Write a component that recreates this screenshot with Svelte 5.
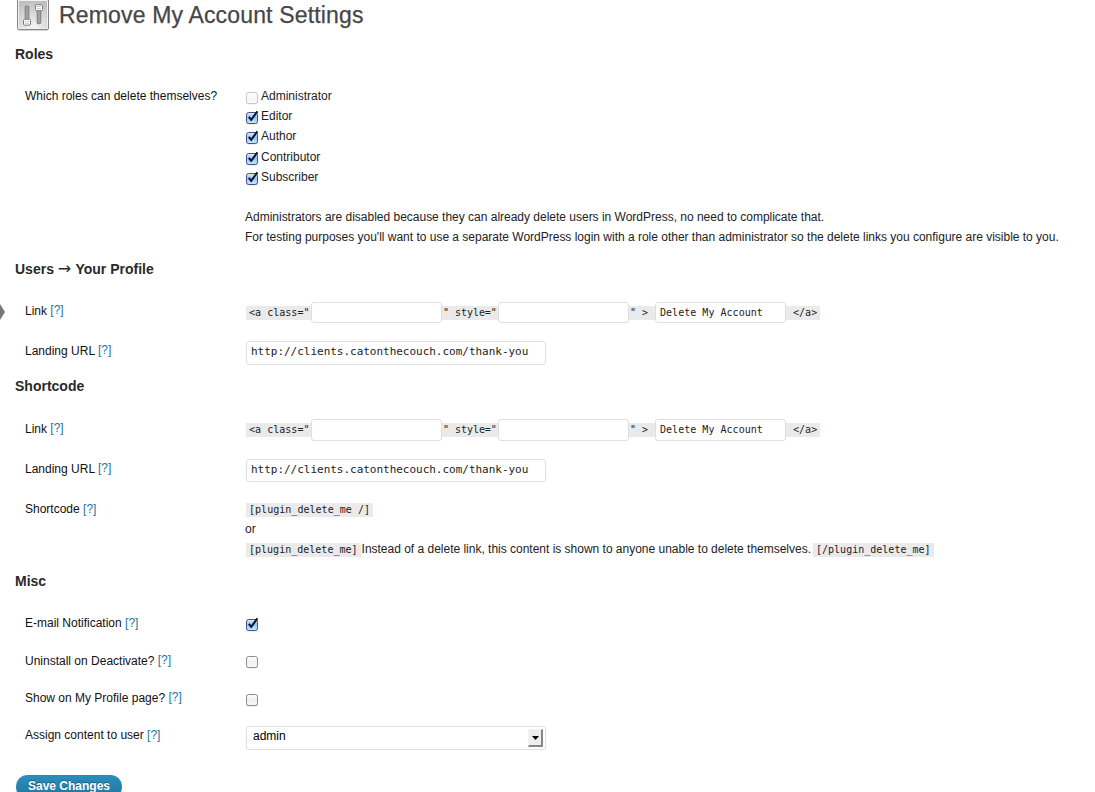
<script>
  const roles = [
    { name: 'Administrator', on: false, disabled: true },
    { name: 'Editor', on: true },
    { name: 'Author', on: true },
    { name: 'Contributor', on: true },
    { name: 'Subscriber', on: true }
  ];
  const url = 'http://clients.catonthecouch.com/thank-you';
</script>

{#snippet check(on, disabled = false)}
  <svg class="check" class:disabled width="14" height="16" viewBox="0 0 14 16" role="img" aria-label={on ? 'checked' : 'unchecked'}>
    <defs>
      <linearGradient id="blue" x1="0" y1="0" x2="0" y2="1">
        <stop offset="0" stop-color="#e3effb" /><stop offset=".45" stop-color="#94c3ef" /><stop offset="1" stop-color="#c3f0ff" />
      </linearGradient>
      <linearGradient id="grey" x1="0" y1="0" x2="0" y2="1">
        <stop offset="0" stop-color="#fff" /><stop offset=".5" stop-color="#f0f0f0" /><stop offset="1" stop-color="#fafafa" />
      </linearGradient>
    </defs>
    <rect x="1" y="4" width="12" height="11.5" rx="2.5" fill="#000" opacity=".12" />
    <rect x="1.5" y="3.5" width="11" height="11" rx="2.3" fill={on ? 'url(#blue)' : 'url(#grey)'} stroke={on ? '#474f93' : '#8e8e8e'} />
    {#if on}<path d="M3.8 7.8 6.2 10.8 12.4 2.3" fill="none" stroke="#06152d" stroke-width="2" />{/if}
  </svg>
{/snippet}

{#snippet label(text, help = true)}
  <div class="label"><span>{text}</span>{#if help}{' '}<a href="#help">[?]</a>{/if}</div>
{/snippet}

{#snippet linkRow()}
  <div class="row link">
    {@render label('Link')}
    <div class="codeline">
      <code class="open">&lt;a class="</code><input aria-label="class" />
      <code class="style">" style="</code><input aria-label="style" />
      <code class="gt">" &gt;</code><input aria-label="text" value="Delete My Account" />
      <code class="close">&lt;/a&gt;</code>
    </div>
  </div>
{/snippet}

<main>
  <header>
    <svg width="34" height="32" viewBox="0 0 34 32" aria-hidden="true">
      <defs>
        <radialGradient id="plate" cx=".5" cy=".95" r=".95"><stop offset="0" stop-color="#f6f6f6" /><stop offset="1" stop-color="#bcbcbc" /></radialGradient>
      </defs>
      <rect x="1.5" y=".5" width="31" height="30.4" rx="2" fill="#aaa" opacity=".5" />
      <rect x="1.5" y="-.5" width="31" height="30" rx="1.5" fill="url(#plate)" stroke="#858585" />
      <path d="M2.5 .5H31.5V28.5H2.5z" fill="none" stroke="#f1f1f1" />
      <g stroke="#7c7c7c" stroke-width="1">
        <rect x="9.2" y="6" width="3.6" height="13.5" rx="1" fill="#a2a2a2" />
        <rect x="21.2" y="9.5" width="3.6" height="14.2" rx="1" fill="#a2a2a2" />
        <rect x="7.5" y="19.2" width="7" height="6" rx="1.2" fill="#fafafa" />
        <rect x="19.5" y="4.7" width="7" height="6" rx="1.2" fill="#fafafa" />
      </g>
      <path d="M9 21.5h4M9 23.5h4M21 6.5h4M21 8.5h4" stroke="#c4c4c4" stroke-width=".8" />
    </svg>
    <h2>Remove My Account Settings</h2>
  </header>

  <h3>Roles</h3>
  <div class="row roles">
    {@render label('Which roles can delete themselves?', false)}
    <div>
      {#each roles as r}
        <div class="role">{@render check(r.on, r.disabled)}<span>{r.name}</span></div>
      {/each}
      <p>Administrators are disabled because they can already delete users in WordPress, no need to complicate that.<br />For testing purposes you'll want to use a separate WordPress login with a role other than administrator so the delete links you configure are visible to you.</p>
    </div>
  </div>

  <h3 class="spaced">Users <span class="to">→</span> Your Profile</h3>
  <div class="anchor">{@render linkRow()}<i class="arrow"></i></div>
  <div class="row landing">{@render label('Landing URL')}<div><input class="wide" aria-label="Landing URL" value={url} /></div></div>

  <h3>Shortcode</h3>
  <div class="second">
    {@render linkRow()}
    <div class="row link">{@render label('Landing URL')}<div><input class="wide" aria-label="Landing URL" value={url} /></div></div>
  </div>
  <div class="row short">
    {@render label('Shortcode')}
    <div>
      <div><code>[plugin_delete_me /]</code></div>
      <div class="or">or</div>
      <div class="inline"><code>[plugin_delete_me]</code><span>Instead of a delete link, this content is shown to anyone unable to delete themselves.</span><code>[/plugin_delete_me]</code></div>
    </div>
  </div>

  <h3 class="spaced">Misc</h3>
  <div class="row misc first">{@render label('E-mail Notification')}<div>{@render check(true)}</div></div>
  <div class="row misc second-box">{@render label('Uninstall on Deactivate?')}<div>{@render check(false)}</div></div>
  <div class="row misc">{@render label('Show on My Profile page?')}<div>{@render check(false)}</div></div>
  <div class="row assign">
    {@render label('Assign content to user')}
    <div class="select"><span>admin</span><button class="drop" aria-label="Choose user"><svg width="7" height="4"><path d="M0 0h7L3.5 4z" /></svg></button></div>
  </div>
  <button class="save">Save Changes</button>
</main>

<style>
  :global(body) { margin: 0; background: #fff; overflow: hidden; }
  main {
    height: 792px; overflow: hidden; box-sizing: border-box;
    font: 12px/20px "Liberation Sans", Arial, sans-serif; color: #222;
  }
  header { display: flex; height: 44px; padding-left: 16px; }
  header svg { flex: none; }
  h2 { margin: 0 0 0 9px; font-size: 23px; line-height: 30px; font-weight: 400; letter-spacing: .16px; color: #464646; -webkit-text-stroke: .25px #464646; white-space: nowrap; }
  h3 { margin: 0 0 22px 15px; font-size: 14px; line-height: 20px; height: 20px; color: #2a2a2a; }
  h3.spaced { margin-top: 12px; }
  .to { display: inline-block; width: 14px; font: 16px/20px "DejaVu Sans", sans-serif; vertical-align: top; }
  .row { display: grid; grid-template-columns: 220px 1fr; padding-left: 25px; white-space: nowrap; }
  .roles { height: 161px; }
  .link { height: 40px; }
  .landing { height: 35px; }
  .short { height: 60px; }
  .misc { height: 37px; }
  .misc.first { height: 38px; }
  .assign { height: 50px; }
  .label { color: #111; }
  a { display: inline-block; height: 20px; line-height: 18px; vertical-align: top; color: #21759b; text-decoration: none; }
  .first a, .assign a, .short a { line-height: 20px; }
  .role { display: flex; height: 20px; }
  .role:nth-child(3) { height: 21px; }
  .role span { margin-left: 2px; }
  .check { display: block; flex: none; margin-top: 3px; }
  .second-box .check { margin-top: 2px; }
  .check.disabled { opacity: .5; }
  p { margin: 20px 0 0; letter-spacing: -.009px; }
  code { font: 10px/14px "DejaVu Sans Mono", monospace; letter-spacing: .03px; background: #eaeaea; height: 14px; box-sizing: border-box; white-space: pre; color: #222; }
  .codeline { display: flex; align-items: center; height: 21px; margin: 1px 0 0 1px; }
  .open { width: 65px; padding-left: 3px; }
  .style { width: 56px; padding-left: 1px; letter-spacing: -.04px; }
  .gt { width: 26px; padding-left: 1px; }
  .close { width: 34px; padding-left: 7px; }
  input {
    display: block; box-sizing: border-box; width: 131px; height: 21px; margin: 0; padding: 0 4px;
    border: 1px solid #dfdfdf; border-radius: 3px; background: #fff; color: #222;
    font: 10px "DejaVu Sans Mono", monospace; letter-spacing: .03px; outline: 0;
  }
  input.wide { width: 300px; height: 24px; margin-left: 1px; padding-bottom: 3px; font-size: 11px; letter-spacing: -.02px; }
  .second { padding-top: 1px; }
  .second .codeline { margin-top: 0; height: 22px; }
  .second .codeline input { height: 22px; padding-bottom: 1px; }
  .second .wide { height: 23px; padding-bottom: 2px; }
  .short code { display: inline-block; margin: 4px 0 0 1px; padding: 0 3px; vertical-align: top; }
  .short > div > div { height: 20px; }
  .inline { display: flex; }
  .inline code { letter-spacing: .01px; }
  .inline span { margin: 0 1px; letter-spacing: -.01px; }
  .select { display: flex; justify-content: space-between; box-sizing: border-box; width: 300px; height: 24px; margin: 1px 0 0 1px; border: 1px solid #dfdfdf; border-radius: 3px; color: #000; }
  .select span { padding-left: 6px; line-height: 18px; }
  .drop { display: flex; align-items: center; justify-content: center; width: 15px; height: 18px; margin: 2px; padding: 0; border: solid; border-width: 1px 2px 2px 1px; border-color: #f3f3f3 #858585 #858585 #f3f3f3; background: #eee; }
  .save { display: block; width: 106px; height: 24px; margin-left: 16px; padding: 0 0 2px; border: 1px solid #298cba; border-radius: 11px; background: linear-gradient(#2a8ebd, #21759b); color: #fff; font: bold 12px/20px "Liberation Sans", Arial, sans-serif; text-shadow: 0 -1px 0 rgba(0,0,0,.3); }
  .anchor { position: relative; }
  .arrow { position: absolute; left: 0; top: 3px; border: solid transparent; border-width: 8px 0 8px 5px; border-left-color: #777; }
</style>
